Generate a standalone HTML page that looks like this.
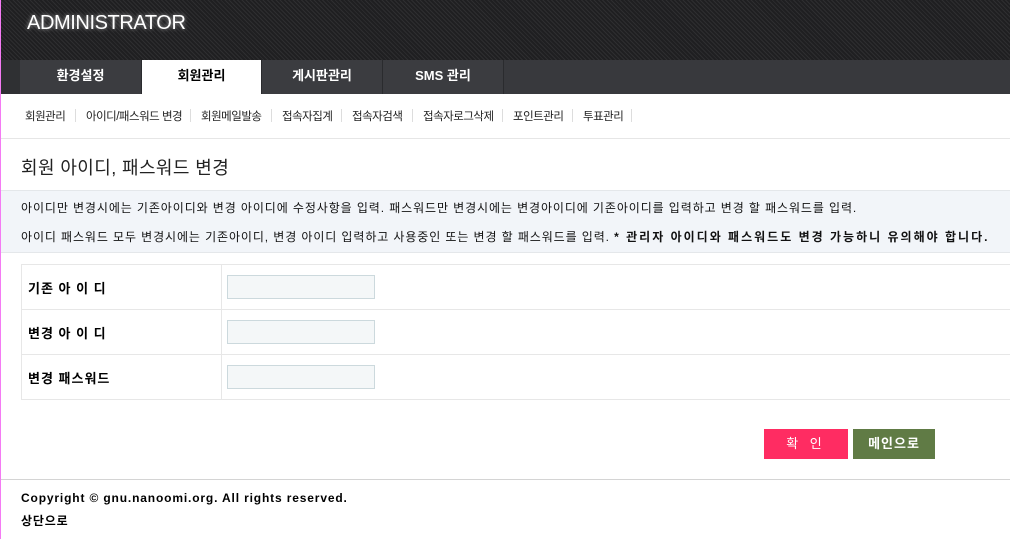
<!DOCTYPE html>
<html><head><meta charset="utf-8"><style>
*{margin:0;padding:0;box-sizing:border-box}
body{width:1010px;height:539px;overflow:hidden;background:#fff;font-family:"Liberation Sans","Noto Sans CJK KR","NanumGothic",sans-serif;font-size:12px;color:#000;position:relative}
.pk{position:absolute;left:0;top:0;width:1px;height:539px;background:#f47af4;z-index:5}
.hd{position:absolute;left:0;top:0;width:1010px;height:60px;background:#252527;background-image:repeating-linear-gradient(45deg,#2e2e30 0 1px,#1f1f21 1px 3px)}
.hd h1{position:absolute;left:27px;top:12px;font-size:20px;font-weight:normal;color:#fff;letter-spacing:-0.4px;text-shadow:0 0 4px rgba(255,255,255,.6)}
.nav{position:absolute;left:0;top:60px;width:1010px;height:34px;background:#38393d}
.nav .l{position:absolute;left:0;top:0;width:20px;height:34px;background:#2f3033}
.nav div.t{position:absolute;top:0;height:34px;line-height:31px;text-align:center;color:#fff;font-weight:bold;font-size:13px;border-right:1px solid #2a2b2e;background:#3b3c40}
.nav div.a{background:#fff;color:#000}
.sub{position:absolute;left:0;top:94px;width:1010px;height:45px;border-bottom:1px solid #e6e6e6}
.sub span{position:absolute;top:14px;font-size:11.5px;color:#222;letter-spacing:-0.5px}
.sub i{position:absolute;top:15px;width:1px;height:13px;background:#ddd}
h2{position:absolute;left:21px;top:154px;font-size:18px;font-weight:normal;color:#222;letter-spacing:0.4px}
.info{position:absolute;left:0;top:190px;width:1010px;height:63px;background:#f2f5f9;border-top:1px solid #e4e7ea;border-bottom:1px solid #e4e7ea}
.info p{position:absolute;left:21px;font-size:12px;color:#111;white-space:nowrap;letter-spacing:0.9px}
.info b{letter-spacing:2px}
table{position:absolute;left:21px;top:264px;width:990px;border-collapse:collapse}
td{border:1px solid #e7e7e7;height:45px}
td.h{width:200px;padding-left:6px;font-weight:bold;font-size:13px;letter-spacing:1px}
td input{display:block;margin-left:5px;width:148px;height:24px;background:#f4f7f8;border:1px solid #ccd9dd}
.b1,.b2{position:absolute;top:429px;height:30px;line-height:29px;color:#fff;text-align:center;font-size:13px}
.b1{left:764px;width:84px;background:#ff2c62;letter-spacing:4px}
.b2{left:853px;width:82px;background:#607b45;font-weight:bold;letter-spacing:1px}
.ft{position:absolute;left:0;top:479px;width:1010px;border-top:1px solid #d4d4d4}
.ft p{position:absolute;left:21px;font-weight:bold;font-size:12px;white-space:nowrap;letter-spacing:0.85px}
</style></head><body>
<div class="pk"></div>
<div class="hd"><h1>ADMINISTRATOR</h1></div>
<div class="nav"><div class="l"></div>
<div class="t" style="left:20px;width:122px">환경설정</div>
<div class="t a" style="left:142px;width:120px">회원관리</div>
<div class="t" style="left:262px;width:121px">게시판관리</div>
<div class="t" style="left:383px;width:121px">SMS 관리</div>
</div>
<div class="sub">
<span style="left:25px">회원관리</span><i style="left:75px"></i>
<span style="left:86px">아이디/패스워드 변경</span><i style="left:190px"></i>
<span style="left:201px">회원메일발송</span><i style="left:271px"></i>
<span style="left:282px">접속자집계</span><i style="left:341px"></i>
<span style="left:352px">접속자검색</span><i style="left:412px"></i>
<span style="left:423px">접속자로그삭제</span><i style="left:502px"></i>
<span style="left:513px">포인트관리</span><i style="left:572px"></i>
<span style="left:583px">투표관리</span><i style="left:631px"></i>
</div>
<h2>회원 아이디, 패스워드 변경</h2>
<div class="info">
<p style="top:8px">아이디만 변경시에는 기존아이디와 변경 아이디에 수정사항을 입력. 패스워드만 변경시에는 변경아이디에 기존아이디를 입력하고 변경 할 패스워드를 입력.</p>
<p style="top:37px">아이디 패스워드 모두 변경시에는 기존아이디, 변경 아이디 입력하고 사용중인 또는 변경 할 패스워드를 입력. <b>* 관리자 아이디와 패스워드도 변경 가능하니 유의해야 합니다.</b></p>
</div>
<table>
<tr><td class="h">기존 아 이 디</td><td><input></td></tr>
<tr><td class="h">변경 아 이 디</td><td><input></td></tr>
<tr><td class="h">변경 패스워드</td><td><input></td></tr>
</table>
<div class="b1">확 인</div>
<div class="b2">메인으로</div>
<div class="ft">
<p style="top:11px">Copyright © gnu.nanoomi.org. All rights reserved.</p>
<p style="top:32px">상단으로</p>
</div>
</body></html>
